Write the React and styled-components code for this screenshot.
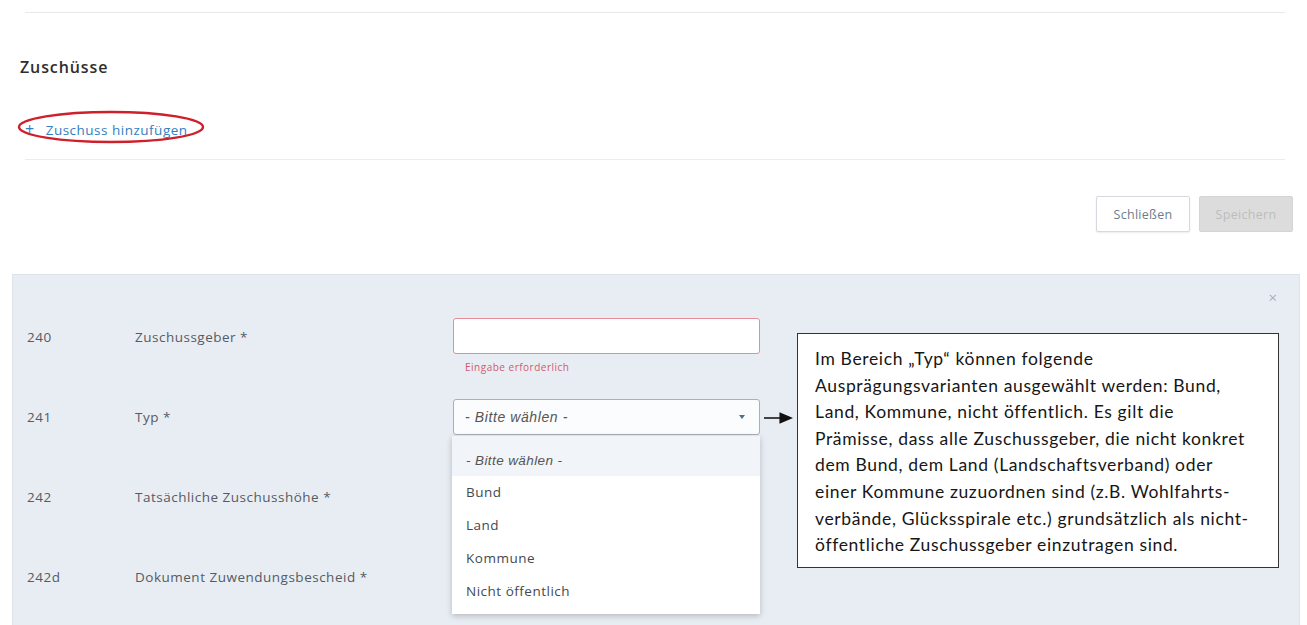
import React from 'react'
import styled, { createGlobalStyle } from 'styled-components'

const GlobalStyle = createGlobalStyle`
    html, body {
        margin: 0;
        padding: 0;
        background: #ffffff;
        font-family: "Open Sans", "Liberation Sans", sans-serif;
        overflow: hidden;
    }
`;

const typOptions = ['Bund', 'Land', 'Kommune', 'Nicht öffentlich'];

const noteLines = [
    'Im Bereich „Typ“ können folgende',
    'Ausprägungsvarianten ausgewählt werden: Bund,',
    'Land, Kommune, nicht öffentlich. Es gilt die',
    'Prämisse, dass alle Zuschussgeber, die nicht konkret',
    'dem Bund, dem Land (Landschaftsverband) oder',
    'einer Kommune zuzuordnen sind (z.B. Wohlfahrts-',
    'verbände, Glücksspirale etc.) grundsätzlich als nicht-',
    'öffentliche Zuschussgeber einzutragen sind.',
];

function App() {
    return (
        <Page>
            <GlobalStyle />
            <Rule />
            <SectionTitle>Zuschüsse</SectionTitle>
            <AddRow>
                <AddLink>
                    <span className="plus">+</span>Zuschuss hinzufügen
                    <Ellipse viewBox="0 0 188 34" preserveAspectRatio="none">
                        <ellipse cx="94" cy="17" rx="92" ry="15" fill="none" stroke="#cf1f2b" strokeWidth="2.4" />
                    </Ellipse>
                </AddLink>
            </AddRow>
            <Rule className="lower" />
            <ButtonBar>
                <Button>Schließen</Button>
                <Button disabled>Speichern</Button>
            </ButtonBar>

            <Panel>
                <CloseX>×</CloseX>
                <Form>
                    <FieldRow>
                        <Num>240</Num>
                        <Label>Zuschussgeber *</Label>
                        <Field>
                            <TextInput $invalid />
                            <ErrorText>Eingabe erforderlich</ErrorText>
                        </Field>
                    </FieldRow>
                    <FieldRow>
                        <Num>241</Num>
                        <Label>Typ *</Label>
                        <Field>
                            <Select>
                                <span>- Bitte wählen -</span>
                                <Caret />
                            </Select>
                            <Menu>
                                <MenuItem $active $placeholder>- Bitte wählen -</MenuItem>
                                {typOptions.map(o => (
                                    <MenuItem key={o}>{o}</MenuItem>
                                ))}
                            </Menu>
                        </Field>
                    </FieldRow>
                    <FieldRow>
                        <Num>242</Num>
                        <Label>Tatsächliche Zuschusshöhe *</Label>
                    </FieldRow>
                    <FieldRow>
                        <Num>242d</Num>
                        <Label>Dokument Zuwendungsbescheid *</Label>
                    </FieldRow>
                </Form>
                <Callout>
                    <Arrow viewBox="0 0 30 12">
                        <line x1="0" y1="6" x2="18" y2="6" stroke="#111" strokeWidth="1.6" />
                        <polygon points="16,0 30,6 16,12" fill="#111" />
                    </Arrow>
                    <NoteBox>
                        {noteLines.map(l => (
                            <div key={l}>{l}</div>
                        ))}
                    </NoteBox>
                </Callout>
            </Panel>
        </Page>
    )
}

const Page = styled.div`
    padding-top: 12px;
    height: 625px;
    box-sizing: border-box;
    display: flex;
    flex-direction: column;
`;

const Rule = styled.div`
    margin: 0 22px 0 25px;
    border-top: 1px solid #e8e8e8;
    &.lower{
        margin-top: 19px;
        border-top-color: #ececec;
    }
`;

const SectionTitle = styled.h3`
    margin: 44px 0 0 20px;
    font-size: 16px;
    letter-spacing: 0.9px;
    line-height: 20px;
    font-weight: 600;
    color: #2e2e2e;
`;

const AddRow = styled.div`
    margin: 42px 0 0 25px;
    display: flex;
`;

const AddLink = styled.a`
    position: relative;
    font-size: 13.5px;
    letter-spacing: 0.5px;
    line-height: 20px;
    color: #2f7fc1;
    cursor: pointer;
    .plus{
        font-size: 16px;
        margin-right: 11px;
    }
`;

const Ellipse = styled.svg`
    position: absolute;
    left: -8px;
    top: -9px;
    width: 188px;
    height: 34px;
    overflow: visible;
`;

const ButtonBar = styled.div`
    margin: 36px 14px 0 0;
    display: flex;
    justify-content: flex-end;
    gap: 9px;
`;

const Button = styled.button`
    width: 94px;
    height: 36px;
    font-family: "Open Sans", sans-serif;
    font-size: 12.5px;
    letter-spacing: 0.3px;
    color: #6d7c8c;
    background: #ffffff;
    border: 1px solid #d6d9dd;
    border-radius: 2px;
    box-shadow: 0 1px 2px rgba(0,0,0,0.08);
    &:disabled{
        background: #dcdcdc;
        border-color: #d4d4d4;
        color: #bdbdbd;
        box-shadow: none;
    }
`;

const Panel = styled.section`
    position: relative;
    margin: 42px 7px 0 12px;
    flex: 1;
    background: #e8edf4;
    border: 1px solid #dfe4ea;
    border-bottom: none;
    display: flex;
    align-items: flex-start;
    padding-top: 43px;
`;

const CloseX = styled.span`
    position: absolute;
    right: 22px;
    top: 12px;
    font-size: 15px;
    color: #a8b0ba;
`;

const Form = styled.div`
    width: 748px;
    flex-shrink: 0;
`;

const FieldRow = styled.div`
    display: grid;
    grid-template-columns: 108px 318px 307px;
    height: 80px;
    padding-left: 14px;
`;

const Num = styled.span`
    font-size: 13.5px;
    letter-spacing: 0.5px;
    line-height: 38px;
    color: #555b62;
`;

const Label = styled.span`
    font-size: 13.5px;
    letter-spacing: 0.5px;
    line-height: 38px;
    color: #555b62;
`;

const Field = styled.div`
    position: relative;
`;

const TextInput = styled.div`
    height: 36px;
    box-sizing: border-box;
    background: #ffffff;
    border: 1px solid ${p => (p.$invalid ? '#e48d99' : '#c7ccd3')};
    border-radius: 3px;
`;

const ErrorText = styled.div`
    margin: 6px 0 0 12px;
    font-size: 10px;
    letter-spacing: 0.5px;
    color: #d5576c;
`;

const Select = styled.div`
    margin-top: 1px;
    height: 36px;
    box-sizing: border-box;
    background: #fbfcfd;
    border: 1px solid #a9b0b9;
    border-radius: 3px;
    display: flex;
    align-items: center;
    justify-content: space-between;
    padding: 0 14px 0 11px;
    font-family: "Liberation Sans", Arial, sans-serif;
    font-style: italic;
    font-size: 14px;
    letter-spacing: 0.6px;
    color: #555;
`;

const Caret = styled.span`
    width: 0;
    height: 0;
    border-left: 3px solid transparent;
    border-right: 3px solid transparent;
    border-top: 4px solid #4b6f8f;
`;

const Menu = styled.ul`
    position: absolute;
    left: -1px;
    top: 38px;
    width: 308px;
    margin: 0;
    padding: 0 0 6px;
    list-style: none;
    background: #ffffff;
    box-shadow: 0 2px 6px rgba(0,0,0,0.22);
    z-index: 2;
`;

const MenuItem = styled.li`
    height: 33px;
    line-height: 33px;
    padding-left: 14px;
    font-size: 13.5px;
    letter-spacing: 0.5px;
    color: #45494e;
    background: ${p => (p.$active ? '#f1f4f8' : '#ffffff')};
    ${p => p.$placeholder && `
        height: 40px;
        line-height: 50px;
        font-family: "Liberation Sans", Arial, sans-serif;
        font-style: italic;
        font-size: 13.5px;
        letter-spacing: 0.4px;
        color: #555;
    `}
`;

const Callout = styled.div`
    display: flex;
    align-items: flex-start;
    margin-top: 15px;
`;

const Arrow = styled.svg`
    width: 29px;
    height: 12px;
    margin: 79px 4px 0 3px;
    flex-shrink: 0;
`;

const NoteBox = styled.div`
    width: 482px;
    height: 235px;
    box-sizing: border-box;
    padding: 12px 0 0 17px;
    background: #ffffff;
    border: 1.5px solid #333;
    font-family: Lato, "Open Sans", sans-serif;
    font-size: 17.5px;
    letter-spacing: 0.65px;
    line-height: 26.6px;
    color: #161616;
    white-space: nowrap;
`;

export default App;
